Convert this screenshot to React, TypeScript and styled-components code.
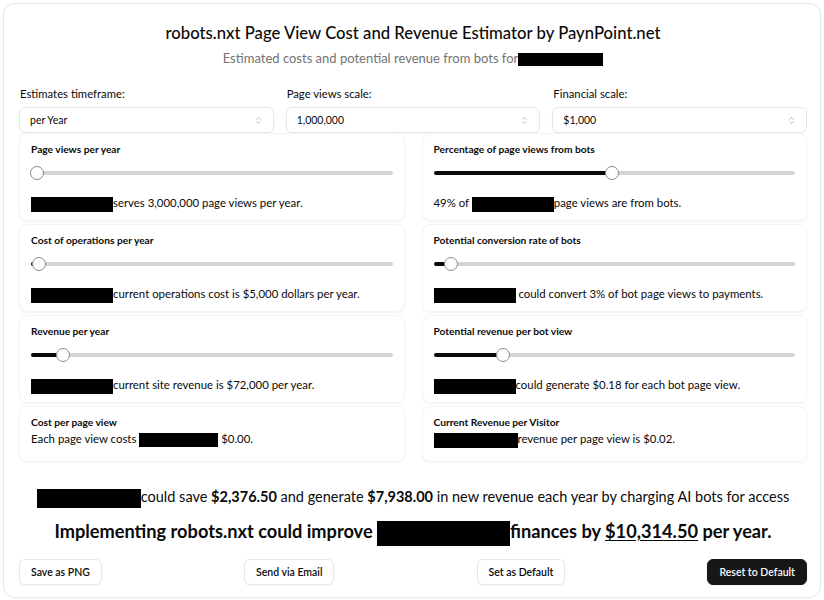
import React from "react";
import styled, { createGlobalStyle } from "styled-components";

const GlobalStyle = createGlobalStyle`
  * { box-sizing: border-box; }
  body {
    margin: 0;
    background: #ffffff;
    font-family: Lato, "Open Sans", "Liberation Sans", sans-serif;
    color: #0a0a0a;
  }
`;

type SliderCard = {
  title: string;
  value: number;
  before?: string;
  redact: number;
  after: string;
};

const leftCards: SliderCard[] = [
  { title: "Page views per year", value: 0.015, redact: 82, after: "serves 3,000,000 page views per year." },
  { title: "Cost of operations per year", value: 0.02, redact: 82, after: "current operations cost is $5,000 dollars per year." },
  { title: "Revenue per year", value: 0.085, redact: 82, after: "current site revenue is $72,000 per year." },
];

const rightCards: SliderCard[] = [
  { title: "Percentage of page views from bots", value: 0.49, before: "49% of ", redact: 82, after: "page views are from bots." },
  { title: "Potential conversion rate of bots", value: 0.045, redact: 82, after: " could convert 3% of bot page views to payments." },
  { title: "Potential revenue per bot view", value: 0.19, redact: 82, after: "could generate $0.18 for each bot page view." },
];

const App = () => {
  return (
    <>
      <GlobalStyle />
      <Panel>
        <Title>robots.nxt Page View Cost and Revenue Estimator by PaynPoint.net</Title>
        <Subtitle>
          Estimated costs and potential revenue from bots for<Redact $w={85} $h={13} />
        </Subtitle>

        <ScaleRow>
          <ScaleField>
            <FieldLabel>Estimates timeframe:</FieldLabel>
            <SelectBox>
              per Year
              <Chevron />
            </SelectBox>
          </ScaleField>
          <ScaleField>
            <FieldLabel>Page views scale:</FieldLabel>
            <SelectBox>
              1,000,000
              <Chevron />
            </SelectBox>
          </ScaleField>
          <ScaleField>
            <FieldLabel>Financial scale:</FieldLabel>
            <SelectBox>
              $1,000
              <Chevron />
            </SelectBox>
          </ScaleField>
        </ScaleRow>

        <CardGrid>
          <Column>
            {leftCards.map((c) => (
              <Card key={c.title}>
                <CardTitle>{c.title}</CardTitle>
                <Slider value={c.value} />
                <CardText>
                  {c.before}
                  <Redact $w={c.redact} $h={15} />
                  {c.after}
                </CardText>
              </Card>
            ))}
            <Card $compact>
              <CardTitle>Cost per page view</CardTitle>
              <CardText $tight>
                Each page view costs <Redact $w={79} $h={14} /> $0.00.
              </CardText>
            </Card>
          </Column>
          <Column>
            {rightCards.map((c) => (
              <Card key={c.title}>
                <CardTitle>{c.title}</CardTitle>
                <Slider value={c.value} />
                <CardText>
                  {c.before}
                  <Redact $w={c.redact} $h={15} />
                  {c.after}
                </CardText>
              </Card>
            ))}
            <Card $compact>
              <CardTitle>Current Revenue per Visitor</CardTitle>
              <CardText $tight>
                <Redact $w={84} $h={15} />
                revenue per page view is $0.02.
              </CardText>
            </Card>
          </Column>
        </CardGrid>

        <Summary>
          <Redact $w={104} $h={19} />
          could save <b>$2,376.50</b> and generate <b>$7,938.00</b> in new revenue each year by charging AI bots
          for access
        </Summary>
        <Headline>
          Implementing robots.nxt could improve <Redact $w={133} $h={25} />
          finances by <u>$10,314.50</u> per year.
        </Headline>

        <ButtonRow>
          <Button>Save as PNG</Button>
          <Button>Send via Email</Button>
          <Button>Set as Default</Button>
          <Button $primary>Reset to Default</Button>
        </ButtonRow>
      </Panel>
    </>
  );
};
export default App;

const Slider = ({ value }: { value: number }) => (
  <Track>
    <Fill style={{ width: `${value * 100}%` }} />
    <Thumb style={{ left: `${value * 100}%` }} />
  </Track>
);

const Chevron = () => (
  <ChevronIcon viewBox="0 0 24 24" fill="none" stroke="currentColor" strokeWidth="2" strokeLinecap="round" strokeLinejoin="round">
    <path d="m7 15 5 5 5-5" />
    <path d="m7 9 5-5 5 5" />
  </ChevronIcon>
);

const Panel = styled.div`
  margin: 3px;
  border: 1px solid #e5e7eb;
  border-radius: 12px;
  padding: 17px 13px 12px 15px;
  min-height: 594px;
  box-shadow: 0 1px 2px rgba(0, 0, 0, 0.04);
`;

const Title = styled.h1`
  margin: 0;
  text-align: center;
  font-size: 16.7px;
  line-height: 24px;
  font-weight: 500;
  color: #0a0a0a;
`;

const Subtitle = styled.p`
  margin: 3px 0 0;
  text-align: center;
  font-size: 13px;
  line-height: 20px;
  color: #737373;
`;

const Redact = styled.span<{ $w: number; $h: number }>`
  display: inline-block;
  width: ${(p) => p.$w}px;
  height: ${(p) => p.$h}px;
  background: #000;
  vertical-align: middle;
`;

const ScaleRow = styled.div`
  display: grid;
  grid-template-columns: repeat(3, 1fr);
  gap: 12px;
  margin-top: 18px;
`;

const ScaleField = styled.div`
  display: flex;
  flex-direction: column;
  gap: 5px;
`;

const FieldLabel = styled.label`
  font-size: 11.3px;
  line-height: 16px;
  color: #0a0a0a;
  padding-left: 1px;
`;

const SelectBox = styled.div`
  display: flex;
  align-items: center;
  justify-content: space-between;
  height: 26px;
  padding: 0 10px;
  border: 1px solid #e5e7eb;
  border-radius: 6px;
  font-size: 10.5px;
  color: #0a0a0a;
  box-shadow: 0 1px 2px rgba(0, 0, 0, 0.03);
`;

const ChevronIcon = styled.svg`
  width: 9px;
  height: 9px;
  color: #a3a3a3;
`;

const CardGrid = styled.div`
  display: grid;
  grid-template-columns: 1fr 1fr;
  column-gap: 17px;
  margin-top: 0;
`;

const Column = styled.div`
  display: flex;
  flex-direction: column;
  gap: 3px;
`;

const Card = styled.div<{ $compact?: boolean }>`
  height: ${(p) => (p.$compact ? 56 : 88)}px;
  padding: 8px 11px 0 11px;
  border-radius: 8px;
  border: 1px solid #f3f4f6;
  box-shadow: 0 1px 3px rgba(0, 0, 0, 0.04);
  background: #fff;
`;

const CardTitle = styled.div`
  font-size: 10.2px;
  line-height: 14px;
  font-weight: 700;
  color: #0a0a0a;
`;

const Track = styled.div`
  position: relative;
  height: 4px;
  margin: 15px 0 0;
  border-radius: 2px;
  background: #d4d4d4;
`;

const Fill = styled.div`
  height: 100%;
  border-radius: 2px;
  background: #0a0a0a;
`;

const Thumb = styled.div`
  position: absolute;
  top: 50%;
  width: 14px;
  height: 14px;
  margin-left: -6px;
  transform: translateY(-50%);
  border-radius: 50%;
  background: #fff;
  border: 1px solid #8a8a8a;
`;

const CardText = styled.div<{ $tight?: boolean }>`
  margin-top: ${(p) => (p.$tight ? 1 : 19)}px;
  font-size: 11.4px;
  line-height: 18px;
  color: #0a0a0a;
  white-space: nowrap;
`;

const Summary = styled.p`
  margin: 25px 0 0;
  text-align: center;
  font-size: 14.5px;
  line-height: 20px;
  color: #0a0a0a;
  white-space: nowrap;
`;

const Headline = styled.p`
  margin: 10px 0 0;
  text-align: center;
  font-size: 18.2px;
  line-height: 26px;
  font-weight: 700;
  color: #0a0a0a;
  white-space: nowrap;

  u {
    text-underline-offset: 2px;
  }
`;

const ButtonRow = styled.div`
  display: flex;
  justify-content: space-between;
  margin-top: 13px;
`;

const Button = styled.button<{ $primary?: boolean }>`
  height: 26px;
  padding: 0 11px;
  border-radius: 6px;
  border: 1px solid ${(p) => (p.$primary ? "#171717" : "#e5e7eb")};
  background: ${(p) => (p.$primary ? "#171717" : "#fff")};
  color: ${(p) => (p.$primary ? "#fafafa" : "#0a0a0a")};
  font-family: inherit;
  font-size: 10.5px;
  font-weight: 600;
  box-shadow: 0 1px 2px rgba(0, 0, 0, 0.05);
`;
